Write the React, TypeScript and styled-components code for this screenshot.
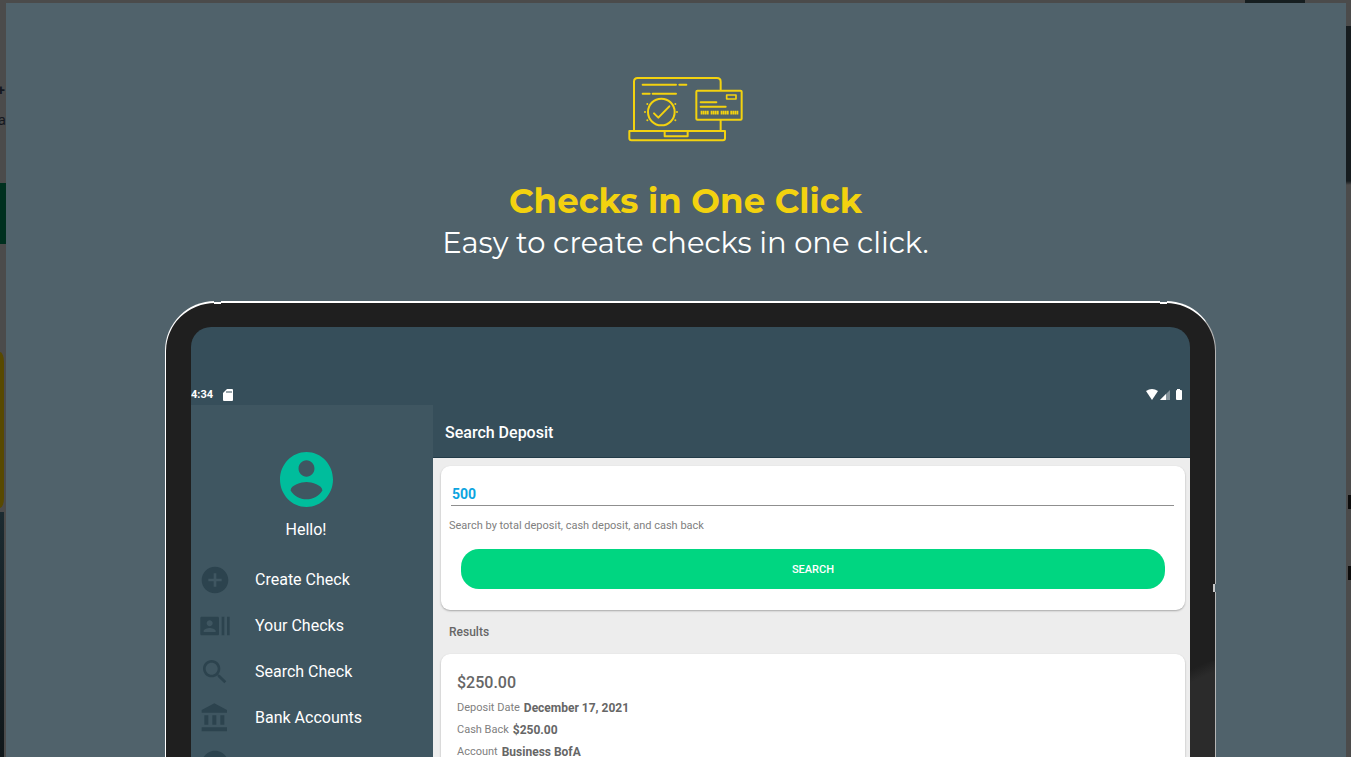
import React from 'react';
import styled, { createGlobalStyle } from 'styled-components';

const Global = createGlobalStyle`
  * { box-sizing: border-box; }
  body {
    margin: 0;
    overflow: hidden;
    background: #4b4b4b;
    font-family: Roboto, "Liberation Sans", sans-serif;
  }
  h1, h2, p, ul, dl, dd { margin: 0; padding: 0; }
`;

const Page = styled.div`
  display: grid;
  grid-template-columns: 6px minmax(0, 1fr) 5px;
  grid-template-rows: 3px minmax(0, 1fr);
  height: 100vh;
  overflow: hidden;
`;

const TopEdge = styled.div`
  grid-column: 1 / -1;
  display: flex;
  justify-content: flex-end;
  padding-right: 46px;
`;

const TopTab = styled.div`
  width: 60px;
  background: #161e20;
`;

const LeftEdge = styled.div`
  overflow: hidden;
  display: flex;
  flex-direction: column;
`;

const EdgeText = styled.div`
  display: flex;
  justify-content: flex-end;
  height: 30px;
  font-size: 15px;
  line-height: 32px;
  color: #15181f;

  &:first-child {
    margin-top: 71px;
    padding-right: 1px;
    font-weight: 700;
  }
`;

const GreenEdge = styled.div`
  height: 61px;
  margin-top: 49px;
  background: #00301f;
`;

const YellowEdge = styled.div`
  width: 4px;
  height: 156px;
  margin-top: 108px;
  border-radius: 0 4px 4px 0 / 0 10px 10px 0;
  background: #584900;
`;

const DarkEdge = styled.div`
  width: 4px;
  flex: 1;
  margin-top: 4px;
  background: linear-gradient(#1c2b31, #10171a);
`;

const RightEdge = styled.div`
  background: linear-gradient(#4b4b4b 23px, #161c1f 23px, #161c1f 178px, #4b4b4b 182px);
  padding-top: 492px;
`;

const EdgeMark = styled.div`
  width: 3px;
  height: 14px;
  margin: 0 0 57px 2px;
  background: #0d0d0d;
`;

const Stage = styled.main`
  display: flex;
  flex-direction: column;
  overflow: hidden;
  background: #50626b;
`;

const Hero = styled.header`
  display: flex;
  flex-direction: column;
  align-items: center;
  padding: 73px 0 37px 19px;
  text-align: center;
  font-family: Montserrat, Inter, sans-serif;
`;

const HeroTitle = styled.h1`
  margin-top: 38px;
  font-size: 34px;
  line-height: 42px;
  font-weight: 700;
  color: #f3d20f;
`;

const HeroText = styled.p`
  font-size: 29px;
  line-height: 42px;
  font-weight: 400;
  color: #fff;
`;

const Tablet = styled.section`
  position: relative;
  flex: 1;
  display: flex;
  min-height: 0;
  margin: 0 130px 0 159px;
  padding: 24px 25px 0;
  border: solid #fff;
  border-width: 2px 1px 0;
  border-right-color: #b5b5b5;
  border-radius: 50px 50px 0 0;
  background: #1f1f1f;
`;

const Glare = styled.div`
  position: absolute;
  right: 0;
  bottom: 0;
  width: 25px;
  height: 96px;
  background: linear-gradient(155deg, #1f1f1f 8px, #2b2b2b 20px);
`;

const TopNotch = styled.i<{ $side: 'left' | 'right' }>`
  position: absolute;
  top: -2px;
  ${(p) => p.$side}: 48px;
  width: 7px;
  height: 3px;
  border-top: 1px solid #50626b;
  background: #fff;
`;

const SideNotch = styled.i`
  position: absolute;
  top: 281px;
  right: -1px;
  width: 3px;
  height: 8px;
  border-right: 1px solid #50626b;
  background: #c8c8c8;
`;

const Screen = styled.div`
  flex: 1;
  display: flex;
  flex-direction: column;
  min-width: 0;
  overflow: hidden;
  border-radius: 20px 20px 0 0;
  background: #364e5a;
`;

const StatusBar = styled.div`
  display: flex;
  align-items: flex-end;
  justify-content: space-between;
  height: 78px;
  padding: 0 8px 1px 0;
  color: #fff;
  font-size: 11px;
  line-height: 16px;
  font-weight: 700;
`;

const StatusGroup = styled.div`
  display: flex;
  align-items: center;
  gap: 10px;
  height: 18px;
`;

const Body = styled.div`
  flex: 1;
  display: grid;
  grid-template-columns: 242px minmax(0, 1fr);
  min-height: 0;
`;

const Sidebar = styled.nav`
  background: #3f5661;
  color: #fff;
`;

const Profile = styled.div`
  display: flex;
  flex-direction: column;
  align-items: center;
  gap: 12px;
  padding: 47px 12px 16px 0;
  font-size: 16px;
  line-height: 22px;
`;

const Menu = styled.ul`
  list-style: none;
`;

const MenuLink = styled.a`
  display: flex;
  align-items: center;
  gap: 24px;
  height: 46px;
  padding-left: 8px;
  color: #fff;
  font-size: 16px;
  line-height: 22px;
  text-decoration: none;

  svg { fill: #2c434e; }
`;

const Content = styled.div`
  display: flex;
  flex-direction: column;
  min-width: 0;
  background: #ededed;
`;

const AppBar = styled.div`
  height: 53px;
  flex: none;
  padding: 17px 12px 0;
  border-bottom: 1px solid #223b48;
  background: #364e5a;
`;

const AppTitle = styled.h2`
  color: #fff;
  font-size: 16px;
  line-height: 22px;
  font-weight: 500;
`;

const Card = styled.div`
  flex: none;
  margin: 8px 5px 0 8px;
  border-radius: 9px;
  background: #fff;
  box-shadow: 0 1px 2px rgba(0, 0, 0, 0.3);
`;

const SearchForm = styled.form`
  display: flex;
  flex-direction: column;
  height: 144px;
  padding: 16px 11px 0 10px;
`;

const SearchInput = styled.input`
  height: 24px;
  padding: 0 0 0 1px;
  border: 0;
  border-bottom: 1px solid #8f8f8f;
  outline: 0;
  background: none;
  color: #0ca4df;
  font: 700 14px/22px Roboto, sans-serif;
`;

const SearchLabel = styled.label`
  margin: 12px 0 15px -2px;
  color: #808080;
  font-size: 11px;
  line-height: 16px;
`;

const SearchButton = styled.button`
  height: 40px;
  margin: 0 9px 0 10px;
  padding: 2px 0 0;
  border: 0;
  border-radius: 18px;
  background: #00d681;
  color: #fff;
  font: 500 11px/16px Roboto, sans-serif;
`;

const ResultsTitle = styled.h2`
  margin: 14px 16px 6px;
  color: #666;
  font-size: 12px;
  line-height: 16px;
  font-weight: 500;
`;

const Deposit = styled.article`
  height: 144px;
  padding: 17px 16px 0;
  color: #666;
`;

const Amount = styled.p`
  font-size: 16px;
  line-height: 24px;
  font-weight: 500;
`;

const Facts = styled.dl`
  margin-top: 2px;
`;

const Fact = styled.div`
  display: flex;
  gap: 4px;
  font-size: 12px;
  line-height: 22px;

  dt {
    color: #808080;
    font-size: 11px;
  }
  dd { font-weight: 700; }
`;

const LaptopArt = () => (
  <svg width="115" height="66" viewBox="84 48 345 198" fill="none" stroke="#f3d20f" strokeWidth="6" strokeLinecap="round" strokeLinejoin="round" aria-hidden="true">
    <path d="M102 211V65q0-11 11-11h238q11 0 11 11v24M362 180v31" />
    <path d="M88 213h287v22q0 6-6 6H94q-6 0-6-6zM194 214v15h69v-15" />
    <path d="M128 74h100M238 74h21M128 101h21M158 101h70" />
    <circle cx="184" cy="156" r="40" />
    <path d="M162 160l13 13 33-34" />
    <path d="M142 132h0M135 156h0M142 181h0M226 132h0M231 156h0M226 181h0" />
    <rect x="289" y="92" width="136" height="87" rx="3" />
    <rect x="380" y="105" width="28" height="12" strokeWidth="5" />
    <path d="M302 127h47M302 140h75" />
    <path d="M302 158h25M332 158h25M362 158h25M391 158h25" strokeWidth="11" strokeLinecap="butt" strokeDasharray="5 1" />
  </svg>
);

const PersonArt = () => (
  <svg width="53" height="55" viewBox="2 2 20 20" preserveAspectRatio="none" fill="#00bd9c" aria-hidden="true">
    <path d="M12 2C6.48 2 2 6.48 2 12s4.48 10 10 10 10-4.48 10-10S17.52 2 12 2zm0 3c1.66 0 3 1.34 3 3s-1.34 3-3 3-3-1.34-3-3 1.34-3 3-3zm0 14.2c-2.5 0-4.71-1.28-6-3.22.03-1.99 4-3.08 6-3.08 1.99 0 5.97 1.09 6 3.08-1.29 1.94-3.5 3.22-6 3.22z" />
  </svg>
);

const menu = [
  {
    label: 'Create Check',
    path: 'M12 2C6.48 2 2 6.48 2 12s4.48 10 10 10 10-4.48 10-10S17.52 2 12 2zm5 11h-4v4h-2v-4H7v-2h4V7h2v4h4v2z',
  },
  {
    label: 'Your Checks',
    path: 'M21 5v14h2V5h-2zm-4 14h2V5h-2v14zM14 5H2c-.55 0-1 .45-1 1v12c0 .55.45 1 1 1h12c.55 0 1-.45 1-1V6c0-.55-.45-1-1-1zM8 7.75c1.24 0 2.25 1.01 2.25 2.25S9.24 12.25 8 12.25 5.75 11.24 5.75 10 6.76 7.75 8 7.75zM12.5 16.5h-9v-.75c0-1.5 3-2.25 4.5-2.25s4.5.75 4.5 2.25v.75z',
  },
  {
    label: 'Search Check',
    path: 'M15.5 14h-.79l-.28-.27C15.41 12.59 16 11.11 16 9.5 16 5.91 13.09 3 9.5 3S3 5.91 3 9.5 5.91 16 9.5 16c1.61 0 3.09-.59 4.23-1.57l.27.28v.79l5 4.99L20.49 19l-4.99-5zm-6 0C7.01 14 5 11.99 5 9.5S7.01 5 9.5 5 14 7.01 14 9.5 11.99 14 9.5 14z',
  },
  {
    label: 'Bank Accounts',
    path: 'M4 10v7h3v-7H4zm6 0v7h3v-7h-3zM2 22h19v-3H2v3zm14-12v7h3v-7h-3zm-4.5-9L2 6v2h19V6l-9.5-5z',
  },
  { label: '', path: 'M12 2C6.48 2 2 6.48 2 12s4.48 10 10 10 10-4.48 10-10S17.52 2 12 2z' },
];

const facts = [
  ['Deposit Date', 'December 17, 2021'],
  ['Cash Back', '$250.00'],
  ['Account', 'Business BofA'],
];

export default function App() {
  return (
    <Page>
      <Global />
      <TopEdge>
        <TopTab />
      </TopEdge>
      <LeftEdge>
        <EdgeText>+</EdgeText>
        <EdgeText>a</EdgeText>
        <GreenEdge />
        <YellowEdge />
        <DarkEdge />
      </LeftEdge>
      <Stage>
        <Hero>
          <LaptopArt />
          <HeroTitle>Checks in One Click</HeroTitle>
          <HeroText>Easy to create checks in one click.</HeroText>
        </Hero>
        <Tablet>
          <TopNotch $side="left" />
          <TopNotch $side="right" />
          <SideNotch />
          <Glare />
          <Screen>
            <StatusBar>
              <StatusGroup>
                <span>4:34</span>
                <svg width="10" height="12" viewBox="0 0 10 12" aria-hidden="true">
                  <path d="M4 0h5q1 0 1 1v10q0 1-1 1H1q-1 0-1-1V4z" fill="#fff" />
                  <path d="M4 2v2M6 2v2M8 2v2" stroke="#364e5a" strokeWidth="1" />
                </svg>
              </StatusGroup>
              <StatusGroup>
                <svg width="36" height="12" viewBox="0 0 36 12" fill="#fff" aria-hidden="true">
                  <path d="M0 2q6-4 12 0L6 11z" />
                  <path d="M14 11L24 1v10z" opacity=".4" />
                  <path d="M14 11l6-6v6z" />
                  <path d="M31 0h3v1h1q1 0 1 1v8q0 1-1 1h-4q-1 0-1-1V2q0-1 1-1z" />
                </svg>
              </StatusGroup>
            </StatusBar>
            <Body>
              <Sidebar>
                <Profile>
                  <PersonArt />
                  <p>Hello!</p>
                </Profile>
                <Menu>
                  {menu.map((item) => (
                    <li key={item.label}>
                      <MenuLink href="#">
                        <svg width="32" height="32" viewBox="0 0 24 24" aria-hidden="true">
                          <path d={item.path} />
                        </svg>
                        {item.label}
                      </MenuLink>
                    </li>
                  ))}
                </Menu>
              </Sidebar>
              <Content>
                <AppBar>
                  <AppTitle>Search Deposit</AppTitle>
                </AppBar>
                <Card>
                  <SearchForm onSubmit={(e) => e.preventDefault()}>
                    <SearchInput id="deposit" type="text" defaultValue="500" />
                    <SearchLabel htmlFor="deposit">Search by total deposit, cash deposit, and cash back</SearchLabel>
                    <SearchButton type="submit">SEARCH</SearchButton>
                  </SearchForm>
                </Card>
                <ResultsTitle>Results</ResultsTitle>
                <Card>
                  <Deposit>
                    <Amount>$250.00</Amount>
                    <Facts>
                      {facts.map(([name, value]) => (
                        <Fact key={name}>
                          <dt>{name}</dt>
                          <dd>{value}</dd>
                        </Fact>
                      ))}
                    </Facts>
                  </Deposit>
                </Card>
              </Content>
            </Body>
          </Screen>
        </Tablet>
      </Stage>
      <RightEdge>
        <EdgeMark />
        <EdgeMark />
      </RightEdge>
    </Page>
  );
}
